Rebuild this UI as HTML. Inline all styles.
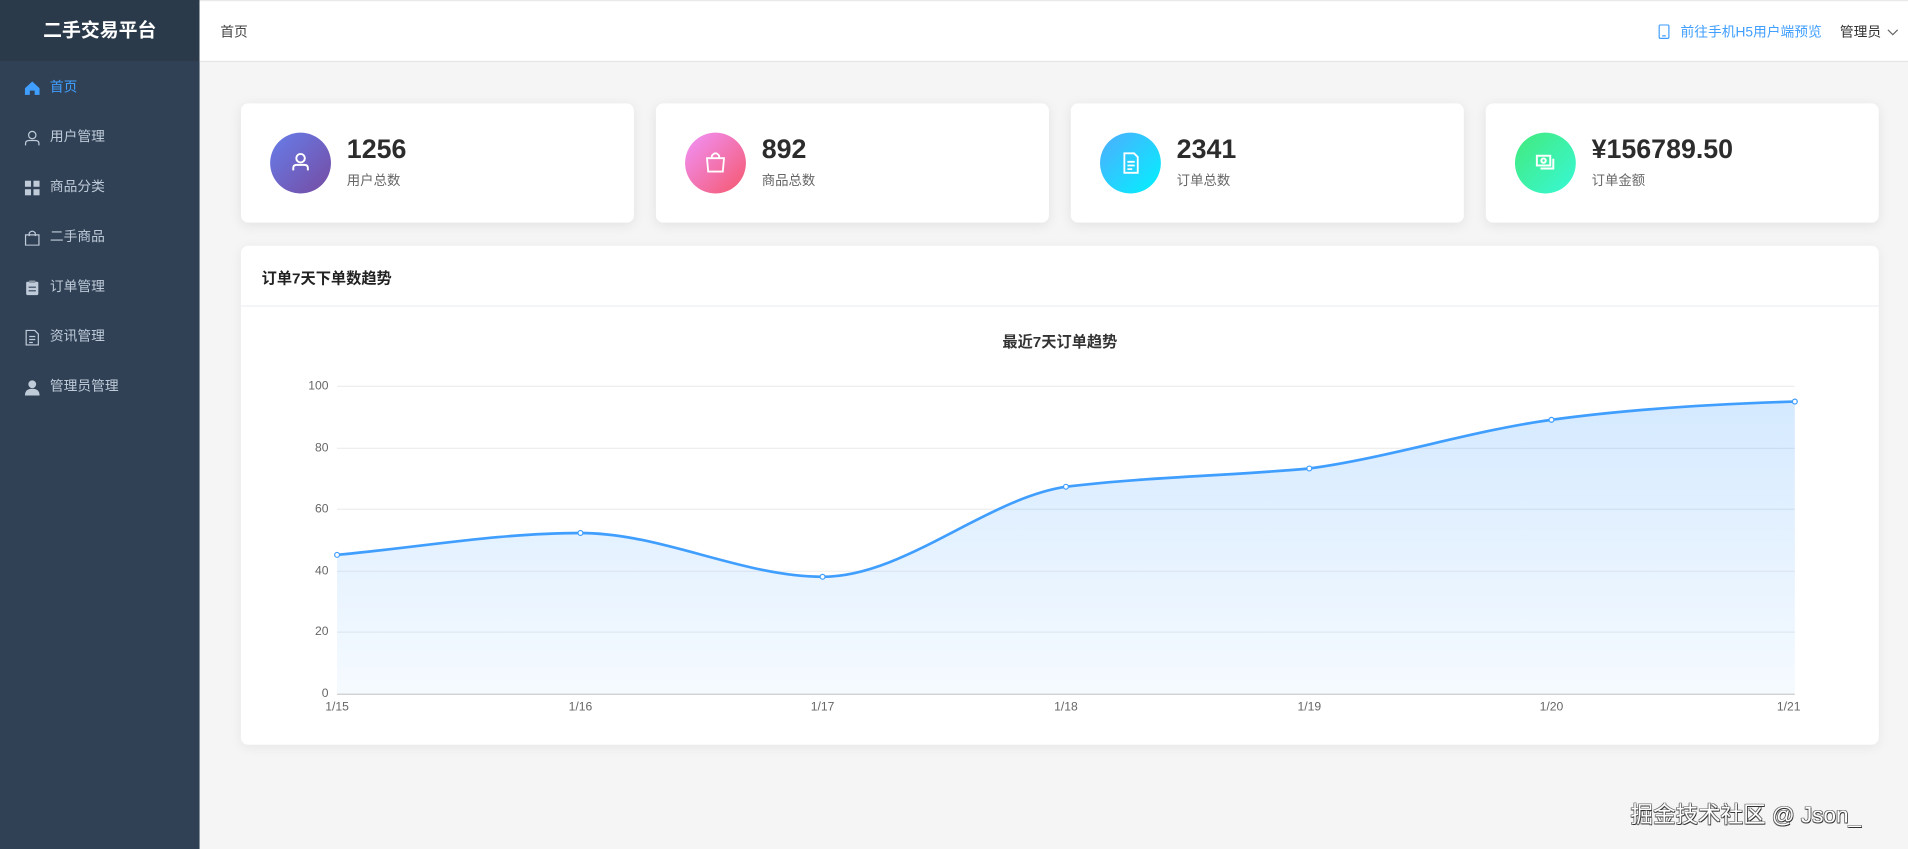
<!DOCTYPE html>
<html><head><meta charset="utf-8">
<style>
*{margin:0;padding:0;box-sizing:border-box}
html,body{width:1908px;height:849px;overflow:hidden;background:#f5f5f5}
#w{position:absolute;left:0;top:0;width:1568px;height:698px;transform:scale(1.21684);transform-origin:0 0;font-family:"Liberation Sans","Noto Sans CJK SC",sans-serif;background:#f5f5f5}
.side{position:absolute;left:0;top:0;width:164px;height:698px;background:#304156}
.logo{height:50px;background:#2b3a4b;color:#fff;font-weight:bold;font-size:15.5px;text-align:center;line-height:52px}
.mi{position:absolute;left:0;width:164px;height:20px;line-height:20px;font-size:11.3px;color:#bfcbd9;padding-left:41px}
.mi svg{position:absolute;left:20px;top:4px}
.mi.a{color:#409eff}
.hdr{position:absolute;left:164px;top:0;right:0;height:51px;background:#fff;border-bottom:1px solid #e6e6e6;border-top:1px solid #e9e9e9}
.card{position:absolute;top:85px;width:323px;height:98px;background:#fff;border-radius:6px;box-shadow:0 2px 10px rgba(0,0,0,.08)}
.ic{position:absolute;left:24px;top:24px;width:50px;height:50px;border-radius:50%}
.num{position:absolute;left:87px;top:25px;font-size:22px;font-weight:bold;color:#2c2c2c}
.lab{position:absolute;left:87px;top:55px;font-size:11px;color:#666}
.ch{position:absolute;left:198px;top:202px;width:1346px;height:410px;background:#fff;border-radius:6px;box-shadow:0 2px 10px rgba(0,0,0,.06)}
.wm{position:absolute;left:1340px;top:656px;font-size:18.5px;color:#fff;text-shadow:0.6px 0.6px 0 #333,-0.6px -0.6px 0 #666,0.6px -0.6px 0 #666,-0.6px 0.6px 0 #666}
</style></head><body><div id="w">
<div class="side">
<div class="logo">二手交易平台</div>
<div class="mi a" style="top:62px"><svg width="13" height="13" viewBox="0 0 13 13"><path d="M6.5 1 L12.5 6.5 V12 H8.5 V8.5 H4.5 V12 H0.5 V6.5 Z" fill="#409eff"/></svg>首页</div>
<div class="mi" style="top:103px"><svg width="13" height="13" viewBox="0 0 13 13" fill="none" stroke="#bfcbd9"><circle cx="6.5" cy="4" r="3"/><path d="M1 12.5 V11 Q1 8.5 4 8.5 H9 Q12 8.5 12 11 V12.5"/></svg>用户管理</div>
<div class="mi" style="top:144px"><svg width="13" height="13" viewBox="0 0 13 13" fill="#bfcbd9"><rect x="0.5" y="0.5" width="5" height="5"/><rect x="7.5" y="0.5" width="5" height="5"/><rect x="0.5" y="7.5" width="5" height="5"/><rect x="7.5" y="7.5" width="5" height="5"/></svg>商品分类</div>
<div class="mi" style="top:185px"><svg width="13" height="13" viewBox="0 0 13 13" fill="none" stroke="#bfcbd9"><path d="M1 4 H12 V12.5 H1 Z M4 5 V2.5 Q6.5 -0.5 9 2.5 V5"/></svg>二手商品</div>
<div class="mi" style="top:226px"><svg width="13" height="13" viewBox="0 0 13 13" fill="#bfcbd9"><rect x="1.5" y="1.5" width="10" height="11" rx="1"/><rect x="4" y="0.5" width="5" height="2" fill="#8a96a4"/><path d="M3.5 6h6M3.5 9h6" stroke="#304156"/></svg>订单管理</div>
<div class="mi" style="top:267px"><svg width="13" height="13" viewBox="0 0 13 13" fill="none" stroke="#bfcbd9"><path d="M1.5 0.5 H8.5 L11.5 3.5 V12.5 H1.5 Z M4 5.5h5M4 8h5M4 10.5h3"/></svg>资讯管理</div>
<div class="mi" style="top:308px"><svg width="13" height="13" viewBox="0 0 13 13" fill="#bfcbd9"><circle cx="6.5" cy="3.8" r="3.2"/><path d="M0.5 13 Q0.5 7.5 6.5 7.5 Q12.5 7.5 12.5 13 Z"/></svg>管理员管理</div>
</div>
<div class="hdr">
<div style="position:absolute;left:17px;top:17px;font-size:11.3px;color:#444">首页</div>
<svg style="position:absolute;left:1199px;top:19px" width="9" height="12" viewBox="0 0 9 12" fill="none" stroke="#409eff"><rect x="0.5" y="0.5" width="8" height="11" rx="1"/><path d="M3 9.5h3"/></svg>
<div style="position:absolute;left:1217px;top:17px;font-size:11.3px;color:#409eff">前往手机H5用户端预览</div>
<div style="position:absolute;left:1348px;top:17px;font-size:11.3px;color:#333">管理员</div>
<svg style="position:absolute;left:1387px;top:23px" width="9" height="6" viewBox="0 0 9 6" fill="none" stroke="#666"><path d="M0.5 0.5 L4.5 4.5 L8.5 0.5"/></svg>
</div>

<div class="card" style="left:198px"><div class="ic" style="background:linear-gradient(135deg,#667eea,#764ba2)"><svg width="50" height="50" viewBox="0 0 50 50" fill="none" stroke="#fff" stroke-width="1.6"><circle cx="25" cy="21" r="3.5"/><path d="M19 31 V29 Q19 26.5 22 26.5 H28 Q31 26.5 31 29 V31"/></svg></div><div class="num">1256</div><div class="lab">用户总数</div></div>
<div class="card" style="left:539px"><div class="ic" style="background:linear-gradient(135deg,#f093fb,#f5576c)"><svg width="50" height="50" viewBox="0 0 50 50" fill="none" stroke="#fff" stroke-width="1.5"><path d="M18 21 H32 L31 32 H19 Z M22 21 V19 Q25 15 28 19 V21"/></svg></div><div class="num">892</div><div class="lab">商品总数</div></div>
<div class="card" style="left:880px"><div class="ic" style="background:linear-gradient(135deg,#4facfe,#00f2fe)"><svg width="50" height="50" viewBox="0 0 50 50" fill="none" stroke="#fff" stroke-width="1.5"><path d="M20 17 H28 L31 20 V33 H20 Z M22.5 24h6M22.5 27h6M22.5 30h4"/></svg></div><div class="num">2341</div><div class="lab">订单总数</div></div>
<div class="card" style="left:1221px"><div class="ic" style="background:linear-gradient(135deg,#43e97b,#38f9d7)"><svg width="50" height="50" viewBox="0 0 50 50" fill="none" stroke="#fff" stroke-width="1.6"><rect x="18" y="19" width="11" height="8"/><circle cx="23.5" cy="23" r="1.8"/><path d="M21 29.5 H31.5 V21.5"/></svg></div><div class="num">¥156789.50</div><div class="lab">订单金额</div></div>

<div class="ch">
<div style="position:absolute;left:17px;top:16px;font-size:12.5px;font-weight:bold;color:#222">订单7天下单数趋势</div>
<div style="position:absolute;left:0;right:0;top:49px;border-top:1px solid #ebeef5"></div>
<div style="position:absolute;left:0;width:1346px;top:68px;text-align:center;font-size:12.5px;font-weight:bold;color:#333">最近7天订单趋势</div>
</div>
<svg style="position:absolute;left:0;top:0" width="1568" height="698" font-family="Liberation Sans,sans-serif" font-size="10" fill="#666">
<defs><linearGradient id="g" x1="0" y1="0" x2="0" y2="1"><stop offset="0" stop-color="#409eff" stop-opacity=".22"/><stop offset="1" stop-color="#409eff" stop-opacity=".05"/></linearGradient></defs>
<g stroke="#eeeeee"><path d="M277 317.5H1475M277 368.5H1475M277 418.5H1475M277 469.5H1475M277 519.5H1475"/></g>
<path d="M277 570.5H1475" stroke="#ccc"/>
<path d="M277 456 C343 450 410 438 477 438 C544 438 610 474 676 474 C743 474 810 410 876 400 C942 392 1010 391 1076 385 C1142 376 1209 354 1275 345 C1341 336 1409 332 1475 330 L1475 570 L277 570 Z" fill="url(#g)"/>
<path d="M277 456 C343 450 410 438 477 438 C544 438 610 474 676 474 C743 474 810 410 876 400 C942 392 1010 391 1076 385 C1142 376 1209 354 1275 345 C1341 336 1409 332 1475 330" fill="none" stroke="#409eff" stroke-width="2.2"/>
<g fill="#fff" stroke="#409eff" stroke-width="1"><circle cx="277" cy="456" r="2"/><circle cx="477" cy="438" r="2"/><circle cx="676" cy="474" r="2"/><circle cx="876" cy="400" r="2"/><circle cx="1076" cy="385" r="2"/><circle cx="1275" cy="345" r="2"/><circle cx="1475" cy="330" r="2"/></g>
<g text-anchor="end"><text x="270" y="320">100</text><text x="270" y="371">80</text><text x="270" y="421">60</text><text x="270" y="472">40</text><text x="270" y="522">20</text><text x="270" y="573">0</text></g>
<g text-anchor="middle"><text x="277" y="584">1/15</text><text x="477" y="584">1/16</text><text x="676" y="584">1/17</text><text x="876" y="584">1/18</text><text x="1076" y="584">1/19</text><text x="1275" y="584">1/20</text><text x="1470" y="584">1/21</text></g>
</svg>
<div class="wm">掘金技术社区 @ Json_</div>
</div></body></html>
